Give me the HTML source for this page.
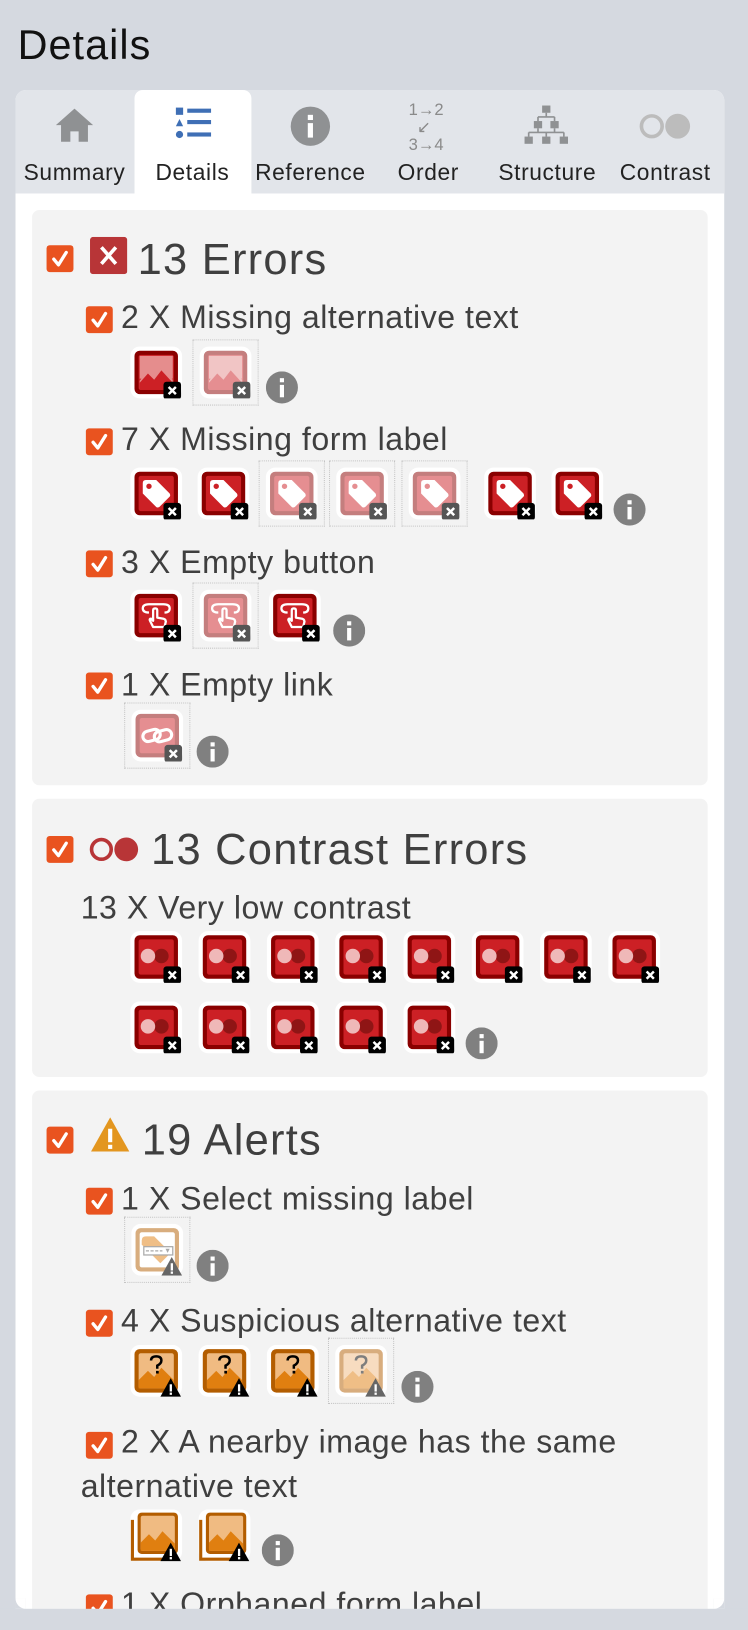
<!DOCTYPE html>
<html><head><meta charset="utf-8">
<style>
*{margin:0;padding:0;box-sizing:border-box}
html,body{width:748px;height:1623px;overflow:hidden;background:#d5d9e0;font-family:"Liberation Sans",sans-serif}
#s{position:absolute;left:0;top:0;width:723px;height:1569px;transform:scale(1.0346);transform-origin:0 0}
.a{position:absolute}
.t{position:absolute;white-space:nowrap;color:#3f3f3f;margin-top:3px}
.h{font-size:42px;line-height:42px;letter-spacing:1.2px}
.i{font-size:31px;line-height:31px;letter-spacing:0.5px}
.tab{position:absolute;top:156px;width:114px;text-align:center;font-size:22px;line-height:22px;letter-spacing:0.6px;color:#222}
.cb{position:absolute;width:26px;height:26px;background:#e9531f;border-radius:3px}
.ic{position:absolute;width:50px;height:50px;background:#fff;border-radius:9px}
.ic svg{position:absolute;left:0;top:0}
.fd{opacity:.5}
.db{position:absolute;width:64px;height:64px;border:1.5px dotted #c4c4c4}
.inf{position:absolute;width:31px;height:31px}
.sec{position:absolute;left:31px;width:653px;background:#f3f3f3;border-radius:7px}
</style></head><body>
<svg width="0" height="0" style="position:absolute">
<defs>
<symbol id="cbk" viewBox="0 0 26 26"><path d="M7 13.5 L11.5 19 L19 7" stroke="#fff" stroke-width="3.2" fill="none" stroke-linecap="round" stroke-linejoin="round"/></symbol>
<symbol id="red" viewBox="0 0 50 50"><rect x="4" y="4" width="42" height="42" rx="5" fill="#8a0000"/><rect x="8" y="8" width="34" height="34" rx="2" fill="#cc2025"/></symbol>
<symbol id="bx" viewBox="0 0 50 50"><rect x="32" y="34" width="17" height="17" rx="3" fill="#000"/><path d="M37 39 L44 46 M44 39 L37 46" stroke="#fff" stroke-width="2.4"/></symbol>
<symbol id="bxg" viewBox="0 0 50 50"><rect x="32" y="34" width="17" height="17" rx="3" fill="#555"/><path d="M37 39 L44 46 M44 39 L37 46" stroke="#fff" stroke-width="2.4"/></symbol>
<symbol id="img" viewBox="0 0 50 50"><use href="#red"/><rect x="9" y="9" width="32" height="22" fill="#e58d8d"/><path d="M9 33 L17 23 L23 29 L30 20 L41 32 L41 41 L9 41Z" fill="#e58d8d"/><path d="M9 41 L9 35 L17 26 L23 32 L30 23 L41 35 L41 41Z" fill="#cc2025"/></symbol>
<symbol id="tag" viewBox="0 0 50 50"><use href="#red"/><path d="M12 15 Q12 12 15 12 L25 12 L38 25 Q39 27 38 28 L28 38 Q26 39 25 38 L12 25Z" fill="#fff"/><circle cx="18" cy="18" r="2.6" fill="#cc2025"/></symbol>
<symbol id="btn" viewBox="0 0 50 50"><use href="#red"/><path d="M18 22 Q12 22 12 18 Q12 14 18 14 L32 14 Q38 14 38 18 Q38 22 33 22" stroke="#fff" stroke-width="2.2" fill="none"/><path d="M22 36 L19 30 Q18 28 20 28 L22 30 L22 20 Q22 18 24 18 Q26 18 26 20 L26 27 L32 28 Q35 29 34 32 L33 36Z" stroke="#fff" stroke-width="2.2" fill="none" stroke-linejoin="round"/></symbol>
<symbol id="lnk" viewBox="0 0 50 50"><use href="#red"/><rect x="11" y="20" width="17" height="10" rx="5" stroke="#fff" stroke-width="3" fill="none" transform="rotate(-15 19 25)"/><rect x="22" y="20" width="17" height="10" rx="5" stroke="#fff" stroke-width="3" fill="none" transform="rotate(-15 31 25)"/></symbol>
<symbol id="con" viewBox="0 0 50 50"><use href="#red"/><circle cx="30" cy="24" r="7" fill="#8f1515"/><circle cx="17" cy="24" r="7" fill="#efb8b8"/></symbol>
<symbol id="or" viewBox="0 0 50 50"><rect x="4" y="4" width="42" height="42" rx="5" fill="#b35d00"/><rect x="8" y="8" width="34" height="34" rx="2" fill="#f0bb82"/><path d="M8 42 L8 34 L17 25 L23 31 L30 22 L42 34 L42 42Z" fill="#e07f10"/></symbol>
<symbol id="wb" viewBox="0 0 50 50"><path d="M39 32 L49 50 L29 50Z" fill="#000"/><rect x="38" y="38" width="2.2" height="7" fill="#fff"/><rect x="38" y="46" width="2.2" height="2.2" fill="#fff"/></symbol>
<symbol id="wbg" viewBox="0 0 50 50"><path d="M39 32 L49 50 L29 50Z" fill="#666"/><rect x="38" y="38" width="2.2" height="7" fill="#fff"/><rect x="38" y="46" width="2.2" height="2.2" fill="#fff"/></symbol>
<symbol id="q" viewBox="0 0 50 50"><use href="#or"/><path d="M20 15 Q20 11 25 11 Q30 11 30 15 Q30 18 26 20 L26 23" stroke="#000" stroke-width="2.4" fill="none"/><rect x="24.8" y="25" width="2.6" height="2.6" fill="#000"/></symbol>
<symbol id="dup" viewBox="0 0 50 50"><path d="M2 10 L2 48 L40 48" stroke="#b35d00" stroke-width="3" fill="none"/><rect x="7" y="3" width="39" height="40" rx="4" fill="#b35d00"/><rect x="10" y="6" width="33" height="34" rx="2" fill="#f0bb82"/><path d="M10 40 L10 32 L18 24 L24 30 L31 21 L43 33 L43 40Z" fill="#e07f10"/></symbol>
<symbol id="sel" viewBox="0 0 50 50"><rect x="4" y="4" width="42" height="42" rx="5" fill="#b35d00"/><rect x="8" y="8" width="34" height="34" rx="2" fill="#fff"/><path d="M10 16 Q10 12 14 12 L22 12 L38 28 L28 38 L10 20Z" fill="#e07f10"/><rect x="12" y="22" width="28" height="8" fill="#fff" stroke="#555" stroke-width="1.2"/><path d="M14 26 H30" stroke="#555" stroke-width="1.2" stroke-dasharray="3 1.5"/><path d="M33 24 L37 24 L35 28Z" fill="#555"/></symbol>
<symbol id="info" viewBox="0 0 31 31"><circle cx="15.5" cy="15.5" r="15.5" fill="#808080"/><rect x="13.5" y="13" width="4" height="12" fill="#fff"/><rect x="13.5" y="6.5" width="4" height="4" fill="#fff"/></symbol>
</defs></svg>

<div id="s">
<div class="t" style="left:17px;top:21px;font-size:40px;line-height:40px;letter-spacing:1px;color:#111">Details</div>

<div class="a" style="left:15px;top:87px;width:685px;height:1480px;background:#fff;border-radius:10px;overflow:hidden">
  <div class="a" style="left:0;top:0;width:685px;height:100px;background:#e2e5ea"></div>
  <div class="a" style="left:115px;top:0;width:113px;height:100px;background:#fff;border-radius:8px 8px 0 0"></div>
</div>

<svg class="a" style="left:52px;top:103px" width="40" height="36" viewBox="0 0 40 36"><path d="M20 2 L38 18 L33 18 L33 34 L24 34 L24 24 L16 24 L16 34 L7 34 L7 18 L2 18Z" fill="#8f9193"/></svg>
<svg class="a" style="left:168px;top:102px" width="38" height="34" viewBox="0 0 38 34"><rect x="2" y="2" width="7" height="7" fill="#3f6fb5"/><rect x="13" y="3" width="23" height="4" fill="#3f6fb5"/><path d="M5.5 13 L9 20 L2 20Z" fill="#3f6fb5"/><rect x="13" y="14" width="23" height="4" fill="#3f6fb5"/><circle cx="5.5" cy="28" r="3.5" fill="#3f6fb5"/><rect x="13" y="26" width="23" height="4" fill="#3f6fb5"/></svg>
<svg class="a" style="left:280px;top:102px" width="40" height="40" viewBox="0 0 40 40"><circle cx="20" cy="20" r="19" fill="#8f9193"/><rect x="17.5" y="17" width="5" height="14" fill="#fff"/><rect x="17.5" y="9" width="5" height="5" fill="#fff"/></svg>
<div class="a" style="left:395px;top:98px;font-size:16px;line-height:17px;color:#8a8a8a;width:42px">1→2<br><span style="padding-left:8px">↙</span><br>3→4</div>
<svg class="a" style="left:506px;top:101px" width="44" height="40" viewBox="0 0 44 40"><rect x="18" y="1" width="8" height="7" fill="#8f9193"/><path d="M22 8 V12 M14 12 H30 M14 12 V16 M30 12 V16 M14 23 V27 M30 23 V27 M5 27 H39 M5 27 V31 M22 27 V31 M39 27 V31" stroke="#8f9193" stroke-width="1.6" fill="none"/><rect x="10" y="16" width="8" height="7" fill="#8f9193"/><rect x="26" y="16" width="8" height="7" fill="#8f9193"/><rect x="1" y="31" width="8" height="7" fill="#8f9193"/><rect x="18" y="31" width="8" height="7" fill="#8f9193"/><rect x="35" y="31" width="8" height="7" fill="#8f9193"/></svg>
<svg class="a" style="left:618px;top:108px" width="52" height="28" viewBox="0 0 52 28"><circle cx="12" cy="14" r="10" stroke="#bcbcbc" stroke-width="3.5" fill="none"/><circle cx="37" cy="14" r="12" fill="#bcbcbc"/></svg>

<div class="tab" style="left:15px">Summary</div>
<div class="tab" style="left:129px">Details</div>
<div class="tab" style="left:243px">Reference</div>
<div class="tab" style="left:357px">Order</div>
<div class="tab" style="left:472px">Structure</div>
<div class="tab" style="left:586px">Contrast</div>

<div class="sec" style="top:203px;height:556px"></div>
<div class="sec" style="top:772px;height:269px"></div>
<div class="sec" style="top:1054px;height:520px"></div>

<div class="cb" style="left:45px;top:237px"><svg width="26" height="26"><use href="#cbk"/></svg></div>
<svg class="a" style="left:87px;top:229px" width="36" height="36" viewBox="0 0 36 36"><rect width="36" height="36" rx="3" fill="#b83537"/><path d="M11 10 L25 26 M25 10 L11 26" stroke="#fff" stroke-width="3.5"/></svg>
<div class="t h" style="left:133px;top:227px">13 Errors</div>

<div class="cb" style="left:83px;top:296px"><svg width="26" height="26"><use href="#cbk"/></svg></div>
<div class="t i" style="left:117px;top:288px">2 X Missing alternative text</div>
<div class="ic" style="left:126px;top:335px"><svg width="50" height="50"><use href="#img"/><use href="#bx"/></svg></div>
<div class="db" style="left:186px;top:328px"></div>
<div class="ic" style="left:193px;top:335px"><svg class="fd" width="50" height="50"><use href="#img"/></svg><svg width="50" height="50"><use href="#bxg"/></svg></div>
<svg class="inf" style="left:257px;top:359px"><use href="#info"/></svg>

<div class="cb" style="left:83px;top:414px"><svg width="26" height="26"><use href="#cbk"/></svg></div>
<div class="t i" style="left:117px;top:406px">7 X Missing form label</div>
<div class="ic" style="left:126px;top:452px"><svg width="50" height="50"><use href="#tag"/><use href="#bx"/></svg></div>
<div class="ic" style="left:191px;top:452px"><svg width="50" height="50"><use href="#tag"/><use href="#bx"/></svg></div>
<div class="db" style="left:250px;top:445px"></div>
<div class="ic" style="left:257px;top:452px"><svg class="fd" width="50" height="50"><use href="#tag"/></svg><svg width="50" height="50"><use href="#bxg"/></svg></div>
<div class="db" style="left:318px;top:445px"></div>
<div class="ic" style="left:325px;top:452px"><svg class="fd" width="50" height="50"><use href="#tag"/></svg><svg width="50" height="50"><use href="#bxg"/></svg></div>
<div class="db" style="left:388px;top:445px"></div>
<div class="ic" style="left:395px;top:452px"><svg class="fd" width="50" height="50"><use href="#tag"/></svg><svg width="50" height="50"><use href="#bxg"/></svg></div>
<div class="ic" style="left:468px;top:452px"><svg width="50" height="50"><use href="#tag"/><use href="#bx"/></svg></div>
<div class="ic" style="left:533px;top:452px"><svg width="50" height="50"><use href="#tag"/><use href="#bx"/></svg></div>
<svg class="inf" style="left:593px;top:477px"><use href="#info"/></svg>

<div class="cb" style="left:83px;top:532px"><svg width="26" height="26"><use href="#cbk"/></svg></div>
<div class="t i" style="left:117px;top:525px">3 X Empty button</div>
<div class="ic" style="left:126px;top:570px"><svg width="50" height="50"><use href="#btn"/><use href="#bx"/></svg></div>
<div class="db" style="left:186px;top:563px"></div>
<div class="ic" style="left:193px;top:570px"><svg class="fd" width="50" height="50"><use href="#btn"/></svg><svg width="50" height="50"><use href="#bxg"/></svg></div>
<div class="ic" style="left:260px;top:570px"><svg width="50" height="50"><use href="#btn"/><use href="#bx"/></svg></div>
<svg class="inf" style="left:322px;top:594px"><use href="#info"/></svg>

<div class="cb" style="left:83px;top:650px"><svg width="26" height="26"><use href="#cbk"/></svg></div>
<div class="t i" style="left:117px;top:643px">1 X Empty link</div>
<div class="db" style="left:120px;top:679px"></div>
<div class="ic" style="left:127px;top:686px"><svg class="fd" width="50" height="50"><use href="#lnk"/></svg><svg width="50" height="50"><use href="#bxg"/></svg></div>
<svg class="inf" style="left:190px;top:711px"><use href="#info"/></svg>

<div class="cb" style="left:45px;top:808px"><svg width="26" height="26"><use href="#cbk"/></svg></div>
<svg class="a" style="left:86px;top:807px" width="50" height="28" viewBox="0 0 50 28"><circle cx="12" cy="14" r="9.5" stroke="#b83537" stroke-width="3.5" fill="none"/><circle cx="36" cy="14" r="11.5" fill="#b83537"/></svg>
<div class="t h" style="left:146px;top:797px">13 Contrast Errors</div>
<div class="t i" style="left:78px;top:859px">13 X Very low contrast</div>
<div class="ic" style="left:126px;top:900px"><svg width="50" height="50"><use href="#con"/><use href="#bx"/></svg></div>
<div class="ic" style="left:192px;top:900px"><svg width="50" height="50"><use href="#con"/><use href="#bx"/></svg></div>
<div class="ic" style="left:258px;top:900px"><svg width="50" height="50"><use href="#con"/><use href="#bx"/></svg></div>
<div class="ic" style="left:324px;top:900px"><svg width="50" height="50"><use href="#con"/><use href="#bx"/></svg></div>
<div class="ic" style="left:390px;top:900px"><svg width="50" height="50"><use href="#con"/><use href="#bx"/></svg></div>
<div class="ic" style="left:456px;top:900px"><svg width="50" height="50"><use href="#con"/><use href="#bx"/></svg></div>
<div class="ic" style="left:522px;top:900px"><svg width="50" height="50"><use href="#con"/><use href="#bx"/></svg></div>
<div class="ic" style="left:588px;top:900px"><svg width="50" height="50"><use href="#con"/><use href="#bx"/></svg></div>
<div class="ic" style="left:126px;top:968px"><svg width="50" height="50"><use href="#con"/><use href="#bx"/></svg></div>
<div class="ic" style="left:192px;top:968px"><svg width="50" height="50"><use href="#con"/><use href="#bx"/></svg></div>
<div class="ic" style="left:258px;top:968px"><svg width="50" height="50"><use href="#con"/><use href="#bx"/></svg></div>
<div class="ic" style="left:324px;top:968px"><svg width="50" height="50"><use href="#con"/><use href="#bx"/></svg></div>
<div class="ic" style="left:390px;top:968px"><svg width="50" height="50"><use href="#con"/><use href="#bx"/></svg></div>
<svg class="inf" style="left:450px;top:993px"><use href="#info"/></svg>

<div class="cb" style="left:45px;top:1089px"><svg width="26" height="26"><use href="#cbk"/></svg></div>
<svg class="a" style="left:87px;top:1079px" width="39" height="35" viewBox="0 0 39 35"><path d="M19.5 1 L38 34 L1 34Z" fill="#e3961f"/><rect x="17.5" y="12" width="4" height="13" fill="#fff"/><rect x="17.5" y="27.5" width="4" height="4" fill="#fff"/></svg>
<div class="t h" style="left:137px;top:1078px">19 Alerts</div>

<div class="cb" style="left:83px;top:1148px"><svg width="26" height="26"><use href="#cbk"/></svg></div>
<div class="t i" style="left:117px;top:1140px">1 X Select missing label</div>
<div class="db" style="left:120px;top:1176px"></div>
<div class="ic" style="left:127px;top:1183px"><svg class="fd" width="50" height="50"><use href="#sel"/></svg><svg width="50" height="50"><use href="#wbg"/></svg></div>
<svg class="inf" style="left:190px;top:1208px"><use href="#info"/></svg>

<div class="cb" style="left:83px;top:1266px"><svg width="26" height="26"><use href="#cbk"/></svg></div>
<div class="t i" style="left:117px;top:1258px">4 X Suspicious alternative text</div>
<div class="ic" style="left:126px;top:1300px"><svg width="50" height="50"><use href="#q"/><use href="#wb"/></svg></div>
<div class="ic" style="left:192px;top:1300px"><svg width="50" height="50"><use href="#q"/><use href="#wb"/></svg></div>
<div class="ic" style="left:258px;top:1300px"><svg width="50" height="50"><use href="#q"/><use href="#wb"/></svg></div>
<div class="db" style="left:317px;top:1293px"></div>
<div class="ic" style="left:324px;top:1300px"><svg class="fd" width="50" height="50"><use href="#q"/></svg><svg width="50" height="50"><use href="#wbg"/></svg></div>
<svg class="inf" style="left:388px;top:1325px"><use href="#info"/></svg>

<div class="cb" style="left:83px;top:1384px"><svg width="26" height="26"><use href="#cbk"/></svg></div>
<div class="t i" style="left:117px;top:1375px">2 X A nearby image has the same</div>
<div class="t i" style="left:78px;top:1418px">alternative text</div>
<div class="ic" style="left:126px;top:1459px"><svg width="50" height="50"><use href="#dup"/><use href="#wb"/></svg></div>
<div class="ic" style="left:192px;top:1459px"><svg width="50" height="50"><use href="#dup"/><use href="#wb"/></svg></div>
<svg class="inf" style="left:253px;top:1483px"><use href="#info"/></svg>

<div class="cb" style="left:83px;top:1541px"><svg width="26" height="26"><use href="#cbk"/></svg></div>
<div class="t i" style="left:117px;top:1532px">1 X Orphaned form label</div>

<div class="a" style="left:0;top:1555px;width:723px;height:20px;background:#d5d9e0"></div>
<div class="a" style="left:15px;top:1545px;width:10px;height:10px;background:#d5d9e0"></div>
<div class="a" style="left:15px;top:1545px;width:10px;height:10px;background:#fff;border-radius:0 0 0 10px"></div>
<div class="a" style="left:690px;top:1545px;width:10px;height:10px;background:#d5d9e0"></div>
<div class="a" style="left:690px;top:1545px;width:10px;height:10px;background:#fff;border-radius:0 0 10px 0"></div>
</div>
</body></html>
